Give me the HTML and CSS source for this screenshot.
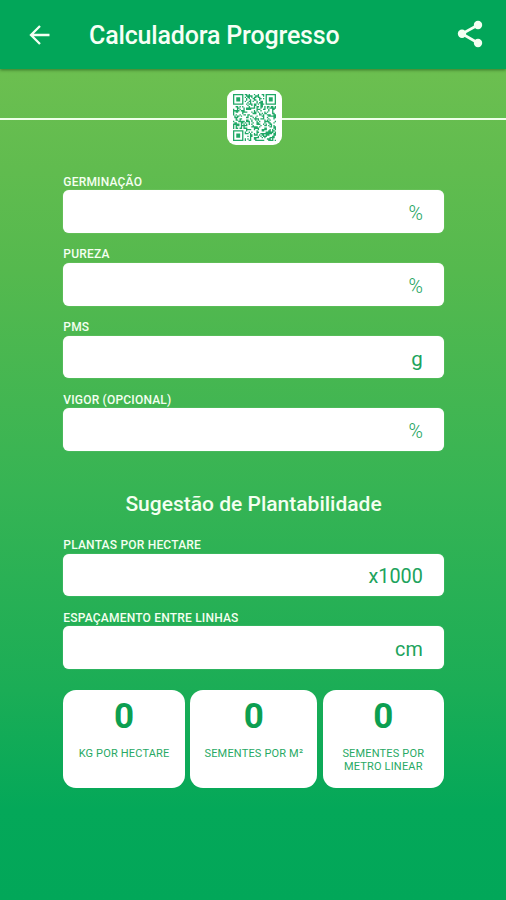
FILE: index.html
```
<!DOCTYPE html>
<html lang="pt-BR">
<head>
<meta charset="utf-8">
<title>Calculadora Progresso</title>
<link rel="stylesheet" href="styles.css">
</head>
<body>
<header class="bar">
  <svg class="back" viewBox="0 0 22 22"><path d="M20.5 11H2M11 2L2 11l9 9"/></svg>
  <h1 class="title">Calculadora Progresso</h1>
  <svg class="share" viewBox="0 0 26 28"><path d="M21 5L5 13.7L21 23"/><circle cx="21" cy="5" r="4.2"/><circle cx="5" cy="13.7" r="4.2"/><circle cx="21" cy="23" r="4.2"/></svg>
</header>
<div class="scan">
  <div class="qr"><svg id="code" viewBox="0 0 33 35" preserveAspectRatio="none"></svg></div>
</div>
<main class="form">
  <label class="field"><span class="name">GERMINAÇÃO</span><span class="box">%</span></label>
  <label class="field"><span class="name">PUREZA</span><span class="box">%</span></label>
  <label class="field"><span class="name">PMS</span><span class="box grams">g</span></label>
  <label class="field"><span class="name">VIGOR (OPCIONAL)</span><span class="box">%</span></label>
  <h2 class="section">Sugestão de Plantabilidade</h2>
  <label class="field"><span class="name">PLANTAS POR HECTARE</span><span class="box wide">x1000</span></label>
  <label class="field"><span class="name">ESPAÇAMENTO ENTRE LINHAS</span><span class="box wide">cm</span></label>
  <div class="results">
    <div class="card"><b class="value">0</b><span class="unit">KG POR HECTARE</span></div>
    <div class="card"><b class="value">0</b><span class="unit">SEMENTES POR M²</span></div>
    <div class="card"><b class="value">0</b><span class="unit">SEMENTES POR<br>METRO LINEAR</span></div>
  </div>
</main>
<script src="code.js"></script>
</body>
</html>
```
FILE: styles.css
```
* { box-sizing: border-box; }
body {
  margin: 0;
  height: 900px;
  overflow: hidden;
  font-family: Roboto, "Liberation Sans", sans-serif;
  color: #fff;
  background: linear-gradient(180deg, #6fc052 0, #6cbf50 69px, #55b94e 270px, #36b454 490px, #1bad56 690px, #04a859 810px, #02a759 900px);
}
.bar {
  height: 69px;
  display: flex;
  align-items: center;
  padding: 1px 23px 0 29px;
  background: #02a659;
  box-shadow: 0 1px 3px rgba(30, 80, 20, .65);
}
.back { width: 22px; height: 22px; fill: none; stroke: #f3fff2; stroke-width: 2.3; }
.title { margin: 1px auto 0 38px; font-size: 25px; line-height: 30px; font-weight: 500; letter-spacing: -.17px; white-space: nowrap; color: #f6fff5; }
.share { width: 26px; height: 28px; margin-top: -2px; fill: #f3fff2; }
.share path { fill: none; stroke: #f3fff2; stroke-width: 2.7; }
.scan { display: flex; height: 99px; align-items: center; padding-bottom: 2px; }
.scan::before, .scan::after { content: ""; height: 1.5px; background: #edffe8; }
.scan::before { width: 227px; margin-top: 3px; }
.scan::after { flex: 1; margin-top: 3px; }
.qr { width: 54.5px; height: 54.5px; border-radius: 9px; background: #fff; display: flex; align-items: center; justify-content: center; }
.qr svg { width: 43px; height: 47px; fill: #20a867; }
.form { width: 380.5px; margin: 4.7px 0 0 63.3px; }
.field { display: block; height: 72.7px; }
.name { display: block; width: max-content; height: 17.5px; line-height: 19.6px; font-size: 12px; font-weight: 500; letter-spacing: .2px; white-space: nowrap; color: #f4fff0; }
.box {
  height: 42.7px;
  display: flex;
  align-items: center;
  justify-content: flex-end;
  padding: 4px 21px 0 0;
  border-radius: 6px;
  background: #fff;
  box-shadow: 0 0 1px rgba(210, 235, 205, .8);
  color: #20a35c;
  font-size: 19.5px;
  font-weight: 300;
}
.grams { font-size: 20.5px; font-weight: 400; }
.wide { font-size: 19.8px; font-weight: 400; }
.section { height: 72.7px; margin: 0; padding-top: 29px; text-align: center; font-size: 21px; line-height: 24px; font-weight: 500; color: #f4fff0; }
.results { display: grid; grid-template-columns: 121.5px 127px 121px; gap: 5.5px; margin-top: 8.2px; }
.card { height: 98.5px; border-radius: 13px; background: #fff; color: #0c9f51; text-align: center; padding-top: 7px; }
.value { display: block; font-size: 35px; line-height: 40px; font-weight: 700; }
.unit { display: block; padding-top: 10.5px; font-size: 11px; line-height: 13px; letter-spacing: .17px; color: #28a964; }
```
FILE: code.js
```
const size = 33;
const rows = 35;
let seed = 91;
let path = "";
function corner(x, y) {
  return (x < 9 && y < 9) || (x > size - 10 && y < 9) || (x < 9 && y > rows - 10);
}
for (let y = 0; y < rows; y++) {
  for (let x = 0; x < size; x++) {
    seed = (seed * 1103515245 + 12345) % 2147483648;
    if (!corner(x, y) && seed / 2147483648 < 0.48) path += `M${x} ${y}h1v1h-1z`;
  }
}
for (const [x, y] of [[0, 0], [size - 8, 0], [0, rows - 8]]) {
  path += `M${x} ${y}h8v8h-8zM${x + 1} ${y + 1}v6h6v-6z`;
  path += `M${x + 2.5} ${y + 2.5}h3v3h-3z`;
}
document.getElementById("code").innerHTML = `<path d="${path}"/>`;
```
